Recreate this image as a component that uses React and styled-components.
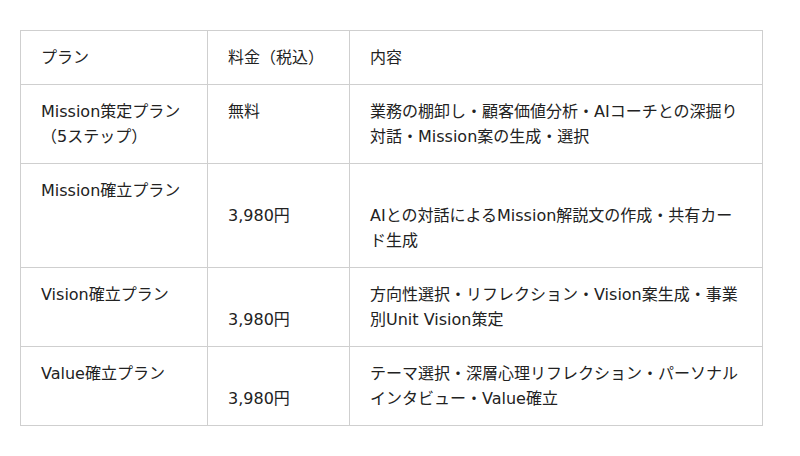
import React from "react";
import styled, { createGlobalStyle } from "styled-components";

const Global = createGlobalStyle`
  html, body { margin: 0; padding: 0; background: #fff; }
  body {
    font-family: "DejaVu Sans", "Noto Sans CJK JP", sans-serif;
    font-size: 16px;
    color: #222;
  }
`;

const Page = styled.div`
  padding: 30px 38px 30px 20px;
`;

const Table = styled.table`
  border-collapse: collapse;
  width: 743px;
  table-layout: fixed;
`;

const Cell = styled.td`
  border: 1px solid #cfcfcf;
  padding: 14px 20px;
  line-height: 25px;
  vertical-align: top;
  text-align: left;
  font-weight: normal;
  word-break: break-all;
`;

const HeadCell = styled(Cell).attrs({ as: "th" })``;

const rows = [
  {
    plan: <>Mission策定プラン<br />（5ステップ）</>,
    price: <>無料</>,
    desc: <>業務の棚卸し・顧客価値分析・AIコーチとの深掘り対話・Mission案の生成・選択</>,
  },
  {
    plan: <>Mission確立プラン</>,
    price: <><br />3,980円</>,
    desc: <><br />AIとの対話によるMission解説文の作成・共有カード生成</>,
  },
  {
    plan: <>Vision確立プラン</>,
    price: <><br />3,980円</>,
    desc: <>方向性選択・リフレクション・Vision案生成・事業別Unit Vision策定</>,
  },
  {
    plan: <>Value確立プラン</>,
    price: <><br />3,980円</>,
    desc: <>テーマ選択・深層心理リフレクション・パーソナルインタビュー・Value確立</>,
  },
];

export default function App() {
  return (
    <Page>
      <Global />
      <Table>
        <colgroup>
          <col style={{ width: 187 }} />
          <col style={{ width: 142 }} />
          <col />
        </colgroup>
        <thead>
          <tr>
            <HeadCell>プラン</HeadCell>
            <HeadCell>料金（税込）</HeadCell>
            <HeadCell>内容</HeadCell>
          </tr>
        </thead>
        <tbody>
          {rows.map((r, i) => (
            <tr key={i}>
              <Cell>{r.plan}</Cell>
              <Cell>{r.price}</Cell>
              <Cell>{r.desc}</Cell>
            </tr>
          ))}
        </tbody>
      </Table>
    </Page>
  );
}
